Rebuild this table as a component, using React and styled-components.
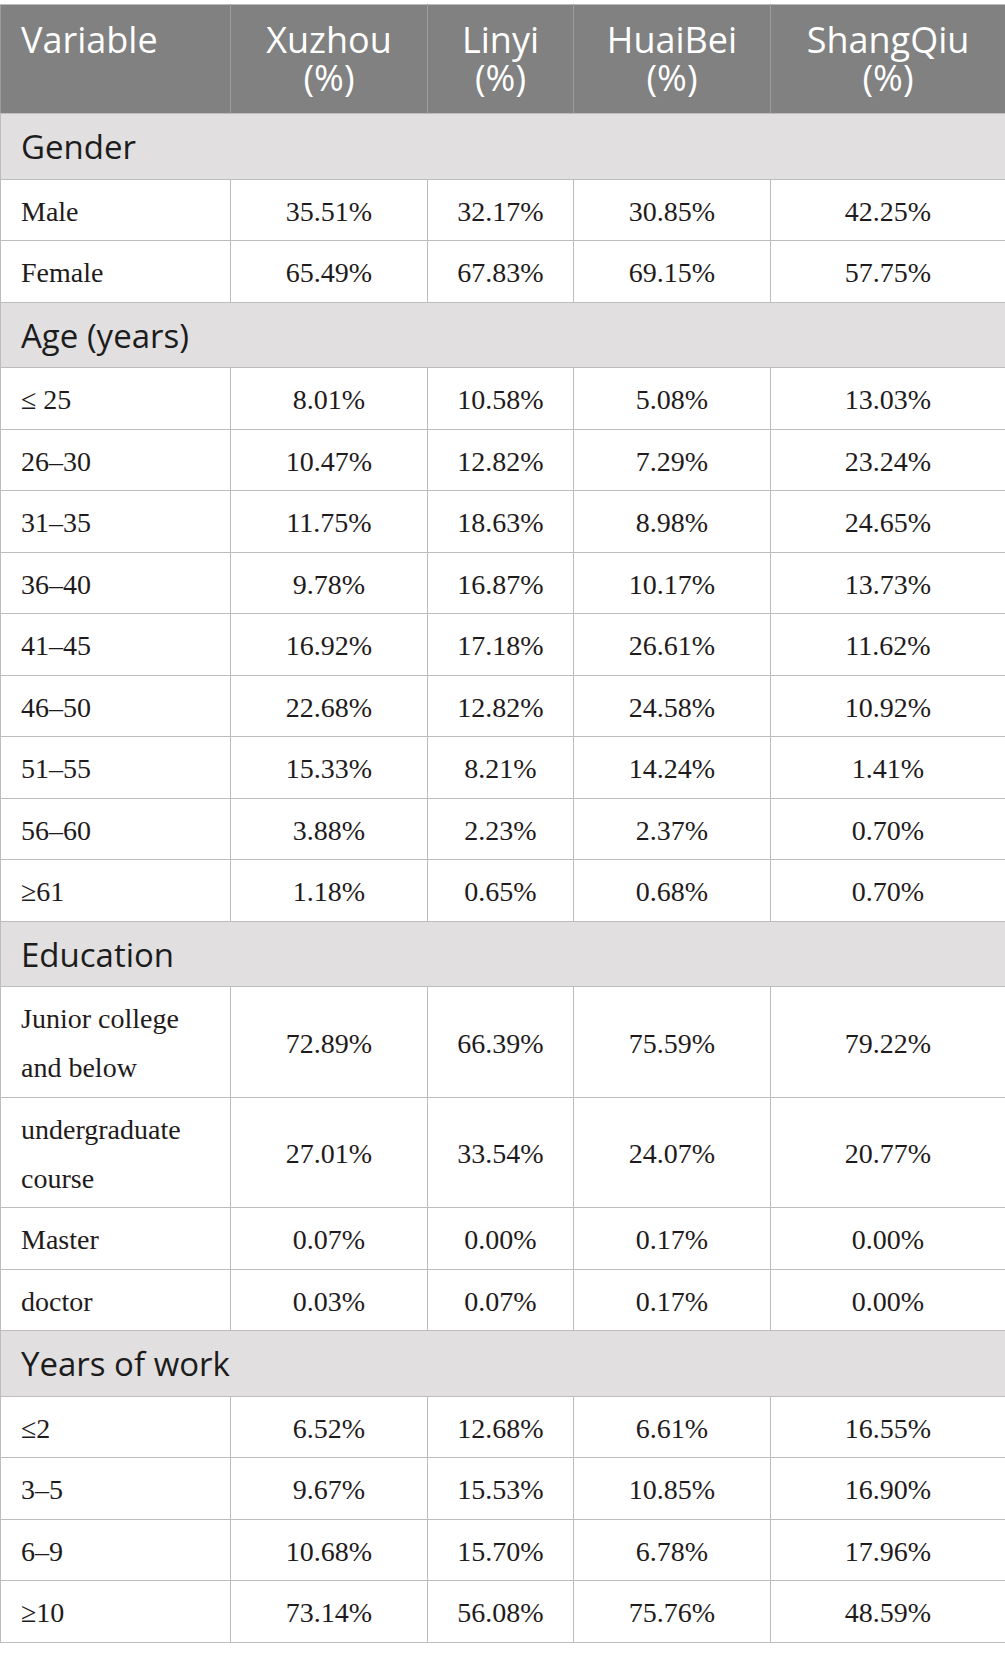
import React from 'react';
import styled, { createGlobalStyle } from 'styled-components';

const GlobalStyle = createGlobalStyle`
  html, body {
    margin: 0;
    padding: 0;
    background: #ffffff;
  }
  body {
    padding-top: 4px;
  }
`;

const Table = styled.table`
  width: 1005px;
  border-collapse: collapse;
  table-layout: fixed;
  border: 1px solid #bdbdbd;
`;

const HeadCell = styled.th`
  background: #808180;
  color: #ffffff;
  font-family: "Open Sans", "Noto Sans", sans-serif;
  font-weight: 400;
  font-size: 36px;
  line-height: 38px;
  padding: 15.5px ${({ left }) => (left ? '20px' : '4px')} 16.5px;
  text-align: ${({ left }) => (left ? 'left' : 'center')};
  vertical-align: top;
  border: 1px solid #9c9c9c;
  border-top-color: #bdbdbd;
  border-bottom-color: #bdbdbd;
`;

const HeadLine = styled.span`
  display: block;
  height: 38px;
`;

const SectionCell = styled.td`
  background: #e1dfe0;
  color: #1c1c1c;
  font-family: "Open Sans", "Noto Sans", sans-serif;
  font-size: 33px;
  line-height: 44px;
  padding: 11px 20px 9.5px;
  border: 1px solid #bdbdbd;
`;

const Cell = styled.td`
  color: #1f1b1c;
  font-family: "Liberation Serif", "Times New Roman", serif;
  font-size: 28px;
  line-height: 49px;
  padding: 7px ${({ left }) => (left ? '20px' : '4px')} 4.5px;
  text-align: ${({ left }) => (left ? 'left' : 'center')};
  vertical-align: middle;
  border: 1px solid #bdbdbd;
`;

const cols = [230, 197, 146, 197, 235];

const heads = [
  ['Variable'],
  ['Xuzhou', '(%)'],
  ['Linyi', '(%)'],
  ['HuaiBei', '(%)'],
  ['ShangQiu', '(%)'],
];

const sections = [
  {
    title: 'Gender',
    rows: [
      ['Male', '35.51%', '32.17%', '30.85%', '42.25%'],
      ['Female', '65.49%', '67.83%', '69.15%', '57.75%'],
    ],
  },
  {
    title: 'Age (years)',
    rows: [
      ['\u2264 25', '8.01%', '10.58%', '5.08%', '13.03%'],
      ['26\u201330', '10.47%', '12.82%', '7.29%', '23.24%'],
      ['31\u201335', '11.75%', '18.63%', '8.98%', '24.65%'],
      ['36\u201340', '9.78%', '16.87%', '10.17%', '13.73%'],
      ['41\u201345', '16.92%', '17.18%', '26.61%', '11.62%'],
      ['46\u201350', '22.68%', '12.82%', '24.58%', '10.92%'],
      ['51\u201355', '15.33%', '8.21%', '14.24%', '1.41%'],
      ['56\u201360', '3.88%', '2.23%', '2.37%', '0.70%'],
      ['\u226561', '1.18%', '0.65%', '0.68%', '0.70%'],
    ],
  },
  {
    title: 'Education',
    rows: [
      [['Junior college', 'and below'], '72.89%', '66.39%', '75.59%', '79.22%'],
      [['undergraduate', 'course'], '27.01%', '33.54%', '24.07%', '20.77%'],
      ['Master', '0.07%', '0.00%', '0.17%', '0.00%'],
      ['doctor', '0.03%', '0.07%', '0.17%', '0.00%'],
    ],
  },
  {
    title: 'Years of work',
    rows: [
      ['\u22642', '6.52%', '12.68%', '6.61%', '16.55%'],
      ['3\u20135', '9.67%', '15.53%', '10.85%', '16.90%'],
      ['6\u20139', '10.68%', '15.70%', '6.78%', '17.96%'],
      ['\u226510', '73.14%', '56.08%', '75.76%', '48.59%'],
    ],
  },
];

const Lines = ({ text }) =>
  Array.isArray(text)
    ? text.map((t, i) => (
        <React.Fragment key={i}>
          {i > 0 && <br />}
          {t}
        </React.Fragment>
      ))
    : text;

export default function App() {
  return (
    <>
      <GlobalStyle />
      <Table>
        <colgroup>
          {cols.map((w, i) => (
            <col key={i} style={{ width: w }} />
          ))}
        </colgroup>
        <thead>
          <tr>
            {heads.map((h, i) => (
              <HeadCell key={i} left={i === 0}>
                {h.map((line) => (
                  <HeadLine key={line}>{line}</HeadLine>
                ))}
              </HeadCell>
            ))}
          </tr>
        </thead>
        <tbody>
          {sections.map((s) => (
            <React.Fragment key={s.title}>
              <tr>
                <SectionCell colSpan={5}>{s.title}</SectionCell>
              </tr>
              {s.rows.map((r, i) => (
                <tr key={i}>
                  {r.map((c, j) => (
                    <Cell key={j} left={j === 0}>
                      <Lines text={c} />
                    </Cell>
                  ))}
                </tr>
              ))}
            </React.Fragment>
          ))}
        </tbody>
      </Table>
    </>
  );
}
